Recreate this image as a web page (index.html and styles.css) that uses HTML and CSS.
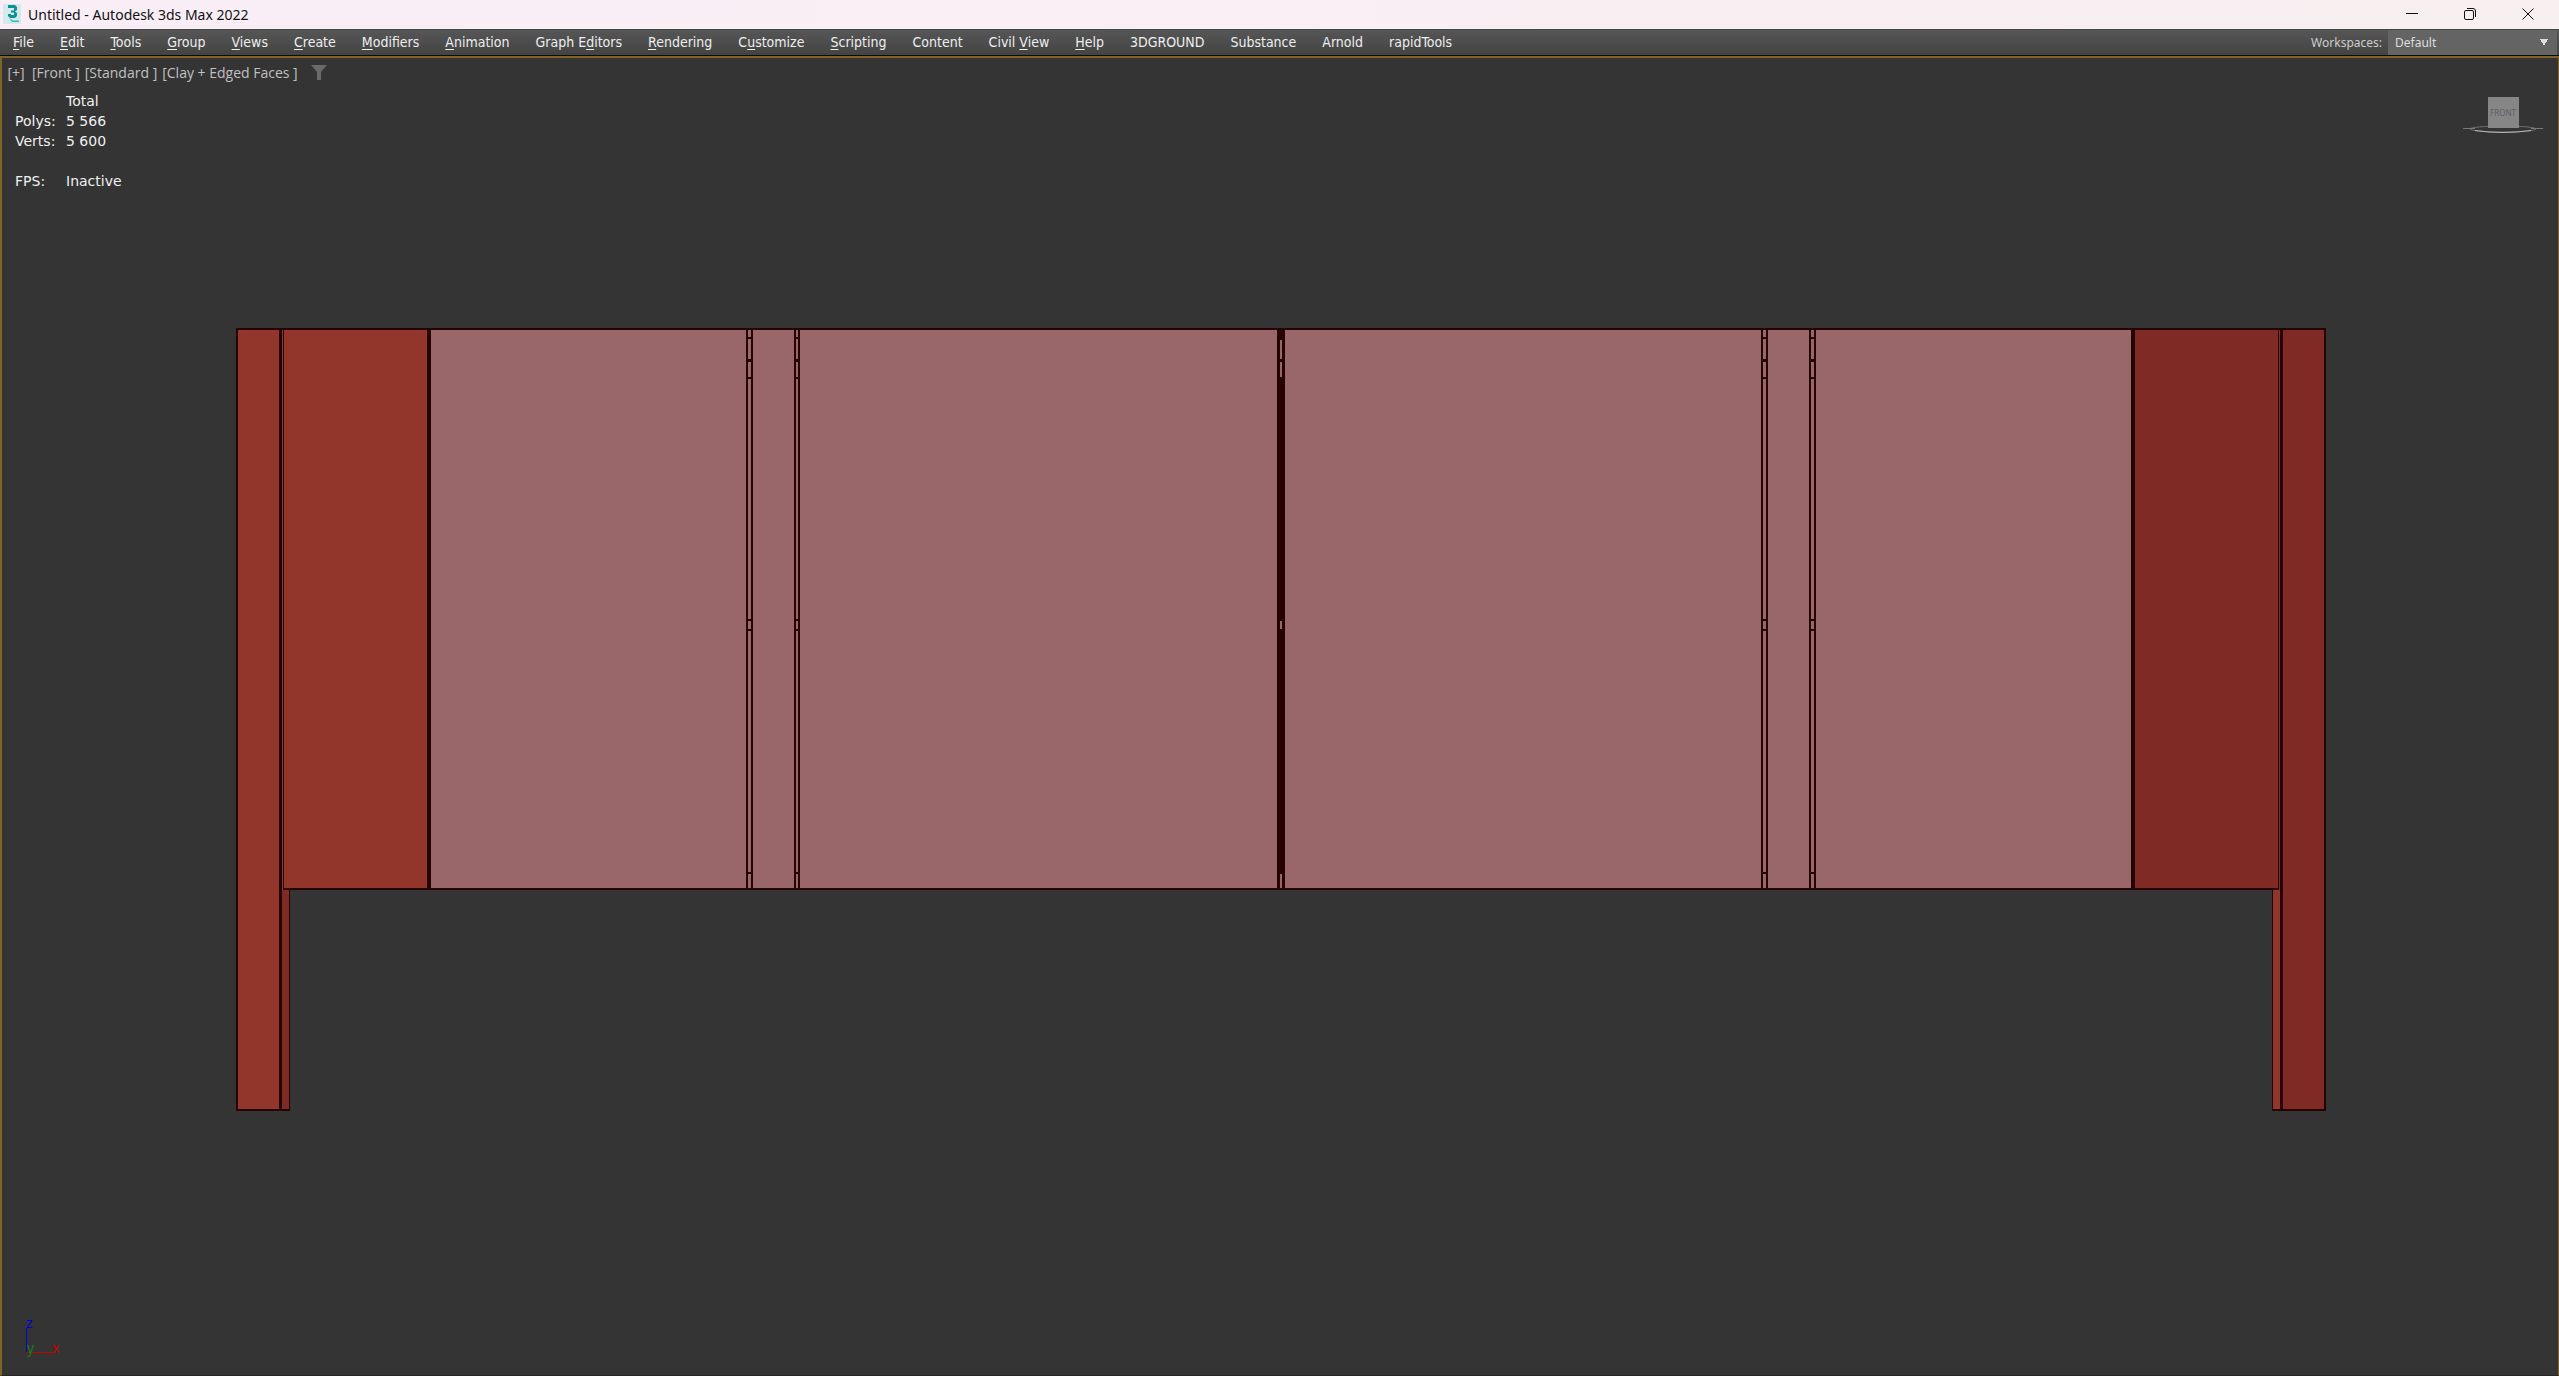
FILE: index.html
```html
<!DOCTYPE html>
<html lang="en">
<head>
    <meta charset="UTF-8">
    <meta name="viewport" content="width=device-width, initial-scale=1.0">
    <title>Untitled - Autodesk 3ds Max 2022</title>
    <link rel="stylesheet" href="styles.css">
</head>
<body>

<header class="titlebar">
    <svg class="app-icon" viewBox="0 0 18 20" aria-hidden="true">
        <rect width="18" height="20" fill="#d3eaec"/>
        <path d="M5 1h7l2 2v3l-2 1.500 2 1.500v3l-2 2H7l-2-2v-2h3v1h3v-2.500H8V6.500h3V4H5z" fill="#0f8f96"/>
        <path d="M6 14l4 2.500h6V18H9z" fill="#37b8bb"/>
    </svg>
    <h1>Untitled - Autodesk 3ds Max 2022</h1>
    <div class="window-buttons">
        <button type="button" aria-label="Minimize"><svg viewBox="0 0 12 12"><path d="M0 5.500h12"/></svg></button>
        <button type="button" aria-label="Restore"><svg viewBox="0 0 12 12"><rect x=".5" y="2.500" width="9" height="9" rx="1.500"/><path d="M3 .5h6a2.500 2.500 0 0 1 2.500 2.500v6"/></svg></button>
        <button type="button" aria-label="Close"><svg viewBox="0 0 12 12"><path d="M.5.5l11 11M11.500.5l-11 11"/></svg></button>
    </div>
</header>

<nav class="menubar">
    <button type="button"><u>F</u>ile</button>
    <button type="button"><u>E</u>dit</button>
    <button type="button"><u>T</u>ools</button>
    <button type="button"><u>G</u>roup</button>
    <button type="button"><u>V</u>iews</button>
    <button type="button"><u>C</u>reate</button>
    <button type="button"><u>M</u>odifiers</button>
    <button type="button"><u>A</u>nimation</button>
    <button type="button">Graph E<u>d</u>itors</button>
    <button type="button"><u>R</u>endering</button>
    <button type="button">C<u>u</u>stomize</button>
    <button type="button"><u>S</u>cripting</button>
    <button type="button">Content</button>
    <button type="button">Civil <u>V</u>iew</button>
    <button type="button"><u>H</u>elp</button>
    <button type="button">3DGROUND</button>
    <button type="button">Substance</button>
    <button type="button">Arnold</button>
    <button type="button">rapidTools</button>
    <div class="workspaces">
        <label for="workspace">Workspaces:</label>
        <select id="workspace">
            <option>Default</option>
        </select>
    </div>
</nav>

<main class="viewport">
    <svg class="scene" viewBox="2 58 2556 1317" shape-rendering="crispEdges" role="img" aria-label="Front view of the model">
        <!-- legs -->
        <g class="edge">
            <rect x="236" y="328" width="54" height="783"/>
            <rect x="2272" y="328" width="54" height="783"/>
        </g>
        <g class="red">
            <rect x="238" y="330" width="41" height="779"/>
            <rect x="2273" y="890" width="7" height="219"/>
            <rect x="282" y="330" width="1" height="560"/>
        </g>
        <g class="dark-red">
            <rect x="2283" y="330" width="41" height="779"/>
            <rect x="282" y="890" width="7" height="219"/>
            <rect x="2279" y="330" width="1" height="560"/>
        </g>

        <!-- cabinet body -->
        <rect class="edge" x="283" y="328" width="1996" height="562"/>
        <rect class="red" x="284" y="330" width="143" height="558"/>
        <rect class="dark-red" x="2135" y="330" width="143" height="558"/>
        <rect class="clay" x="431" y="330" width="1700" height="558"/>

        <!-- door gaps -->
        <g class="edge">
            <rect x="746" y="330" width="2" height="558"/>
            <rect x="751" y="330" width="2" height="558"/>
            <rect x="794" y="330" width="2" height="558"/>
            <rect x="798" y="330" width="2" height="558"/>
            <rect x="1277" y="330" width="8" height="558"/>
            <rect x="1761" y="330" width="2" height="558"/>
            <rect x="1766" y="330" width="2" height="558"/>
            <rect x="1809" y="330" width="2" height="558"/>
            <rect x="1814" y="330" width="2" height="558"/>
        </g>

        <!-- hinges -->
        <path class="hinge" d="M746 338h7M794 338h6M1761 338h7M1809 338h7
            M746 378h7M794 378h6M1761 378h7M1809 378h7
            M746 620h7M794 620h6M1761 620h7M1809 620h7
            M746 630h7M794 630h6M1761 630h7M1809 630h7
            M746 873h7M794 873h6M1761 873h7M1809 873h7"/>
        <path class="hinge thick" d="M746 360.500h7M794 360.500h6M1761 360.500h7M1809 360.500h7"/>
        <g class="clay">
            <rect x="1280" y="340" width="2" height="19"/>
            <rect x="1280" y="362" width="2" height="15"/>
            <rect x="1280" y="621" width="2" height="8"/>
            <rect x="1280" y="874" width="2" height="14"/>
        </g>
    </svg>

    <div class="viewport-labels">
        <button type="button">[+]</button>
        <button type="button">[Front ]</button>
        <button type="button">[Standard ]</button>
        <button type="button">[Clay + Edged Faces ]</button>
        <button type="button" class="filter" aria-label="Filter"><svg viewBox="0 0 16 15"><path d="M0 0h16l-6 7v8H6V7z"/></svg></button>
    </div>

    <table class="stats">
        <tr><td></td><th scope="col">Total</th></tr>
        <tr><th scope="row">Polys:</th><td>5 566</td></tr>
        <tr><th scope="row">Verts:</th><td>5 600</td></tr>
        <tr class="fps"><th scope="row">FPS:</th><td>Inactive</td></tr>
    </table>

    <svg class="viewcube" viewBox="0 0 84 40" role="img" aria-label="View cube">
        <ellipse cx="42" cy="32" rx="33" ry="3" fill="none" stroke="#6c6f73"/>
        <path d="M2 31.500h12M70 31.500h12" stroke="#777a7e"/>
        <path d="M14 33.500q28 4 56 0" fill="none" stroke="#b4b8bc"/>
        <rect x="27" y="0" width="31" height="31" fill="#868686"/>
        <text x="42" y="19" text-anchor="middle">FRONT</text>
    </svg>

    <svg class="axis" viewBox="0 0 40 46" role="img" aria-label="Axis">
        <path d="M4.500 38V14" stroke="#0000d8"/>
        <path d="M5 38.500h26" stroke="#c80000"/>
        <text x="4" y="14" fill="#0000d8">z</text>
        <text x="5" y="39" fill="#108010">y</text>
        <text x="30" y="39" fill="#c80000">x</text>
    </svg>
</main>

</body>
</html>
```

FILE: styles.css
```css
* {
    box-sizing: border-box;
}

body {
    margin: 0;
    height: 100vh;
    display: flex;
    flex-direction: column;
    overflow: hidden;
    background: #343434;
    font-family: "Noto Sans", "Open Sans", sans-serif;
    font-size: 14px;
}

button {
    padding: 0;
    border: none;
    background: none;
    color: inherit;
    font: inherit;
    white-space: nowrap;
}

/* title bar */
.titlebar {
    display: flex;
    align-items: center;
    flex: none;
    height: 29px;
    padding: 0 2px 1px 3px;
    background: linear-gradient(90deg, #f9eef6, #f8eff1);
    color: #111;
}

.app-icon {
    width: 18px;
    height: 20px;
    margin-right: 7px;
}

.titlebar h1 {
    margin: 0;
    font-size: 14px;
    font-weight: 400;
}

.window-buttons {
    display: flex;
    height: 100%;
    margin-left: auto;
}

.window-buttons button {
    display: flex;
    align-items: center;
    justify-content: center;
    width: 58px;
}

.window-buttons svg {
    width: 12px;
    height: 12px;
    fill: none;
    stroke: #111;
}

/* menu bar */
.menubar {
    display: flex;
    align-items: stretch;
    flex: none;
    gap: 26px;
    height: 27px;
    padding-left: 13px;
    border-top: 1px solid #424843;
    border-bottom: 1px solid #0c0c0c;
    background: linear-gradient(#565656, #434343);
    color: #eee;
}

.menubar > button {
    padding-bottom: 2px;
    font-family: "DejaVu Sans Condensed", "Open Sans", sans-serif;
}

.menubar u {
    text-underline-offset: 2px;
}

.workspaces {
    display: flex;
    align-items: center;
    gap: 6px;
    margin-left: auto;
    padding-right: 2px;
    color: #ccc;
    font-size: 12px;
}

.workspaces select {
    appearance: none;
    width: 169px;
    height: 100%;
    padding: 0 7px;
    border: none;
    border-radius: 0;
    background: conic-gradient(from -30deg at 50% 100%, #ddd 60deg, transparent 0) right 9px center / 8px 7px no-repeat, #646464;
    color: #ddd;
    font: inherit;
}

/* viewport */
.viewport {
    position: relative;
    flex: 1;
    min-height: 0;
    border: 2px solid #7e6426;
    border-right-width: 1px;
    border-bottom: 1px solid #2a2426;
    color: #c0c0c0;
}

.scene {
    position: absolute;
    inset: 0;
    width: 100%;
    height: 100%;
}

.edge {
    fill: #250303;
}

.red {
    fill: #92362c;
}

.dark-red {
    fill: #802a25;
}

.clay {
    fill: #99676a;
}

.hinge {
    stroke: #250303;
    stroke-width: 2;
}

.hinge.thick {
    stroke-width: 3;
}

.viewport-labels {
    position: relative;
    display: flex;
    align-items: center;
    gap: 5px;
    height: 28px;
    padding-left: 3px;
    font-family: "Open Sans", sans-serif;
}

.viewport-labels button {
    min-width: 22px;
}

.viewport-labels .filter {
    display: flex;
    margin-left: 8px;
}

.filter svg {
    width: 16px;
    height: 15px;
    fill: #6a6a6a;
}

.stats {
    position: relative;
    margin: 5px 0 0 13px;
    border-collapse: collapse;
    color: #f0f0f0;
    font-family: "DejaVu Sans", sans-serif;
    line-height: 20px;
}

.stats th,
.stats td {
    padding: 0;
    font-weight: 400;
    text-align: left;
}

.stats tr > :first-child {
    width: 51px;
}

.stats .fps > * {
    padding-top: 20px;
}

.viewcube {
    position: absolute;
    top: 39px;
    right: 13px;
    width: 84px;
    height: 40px;
}

.viewcube text {
    fill: #5c5f66;
    font-size: 8px;
}

.axis {
    position: absolute;
    left: 20px;
    bottom: 15px;
    width: 40px;
    height: 46px;
}

.axis text {
    font-size: 14px;
}
```
